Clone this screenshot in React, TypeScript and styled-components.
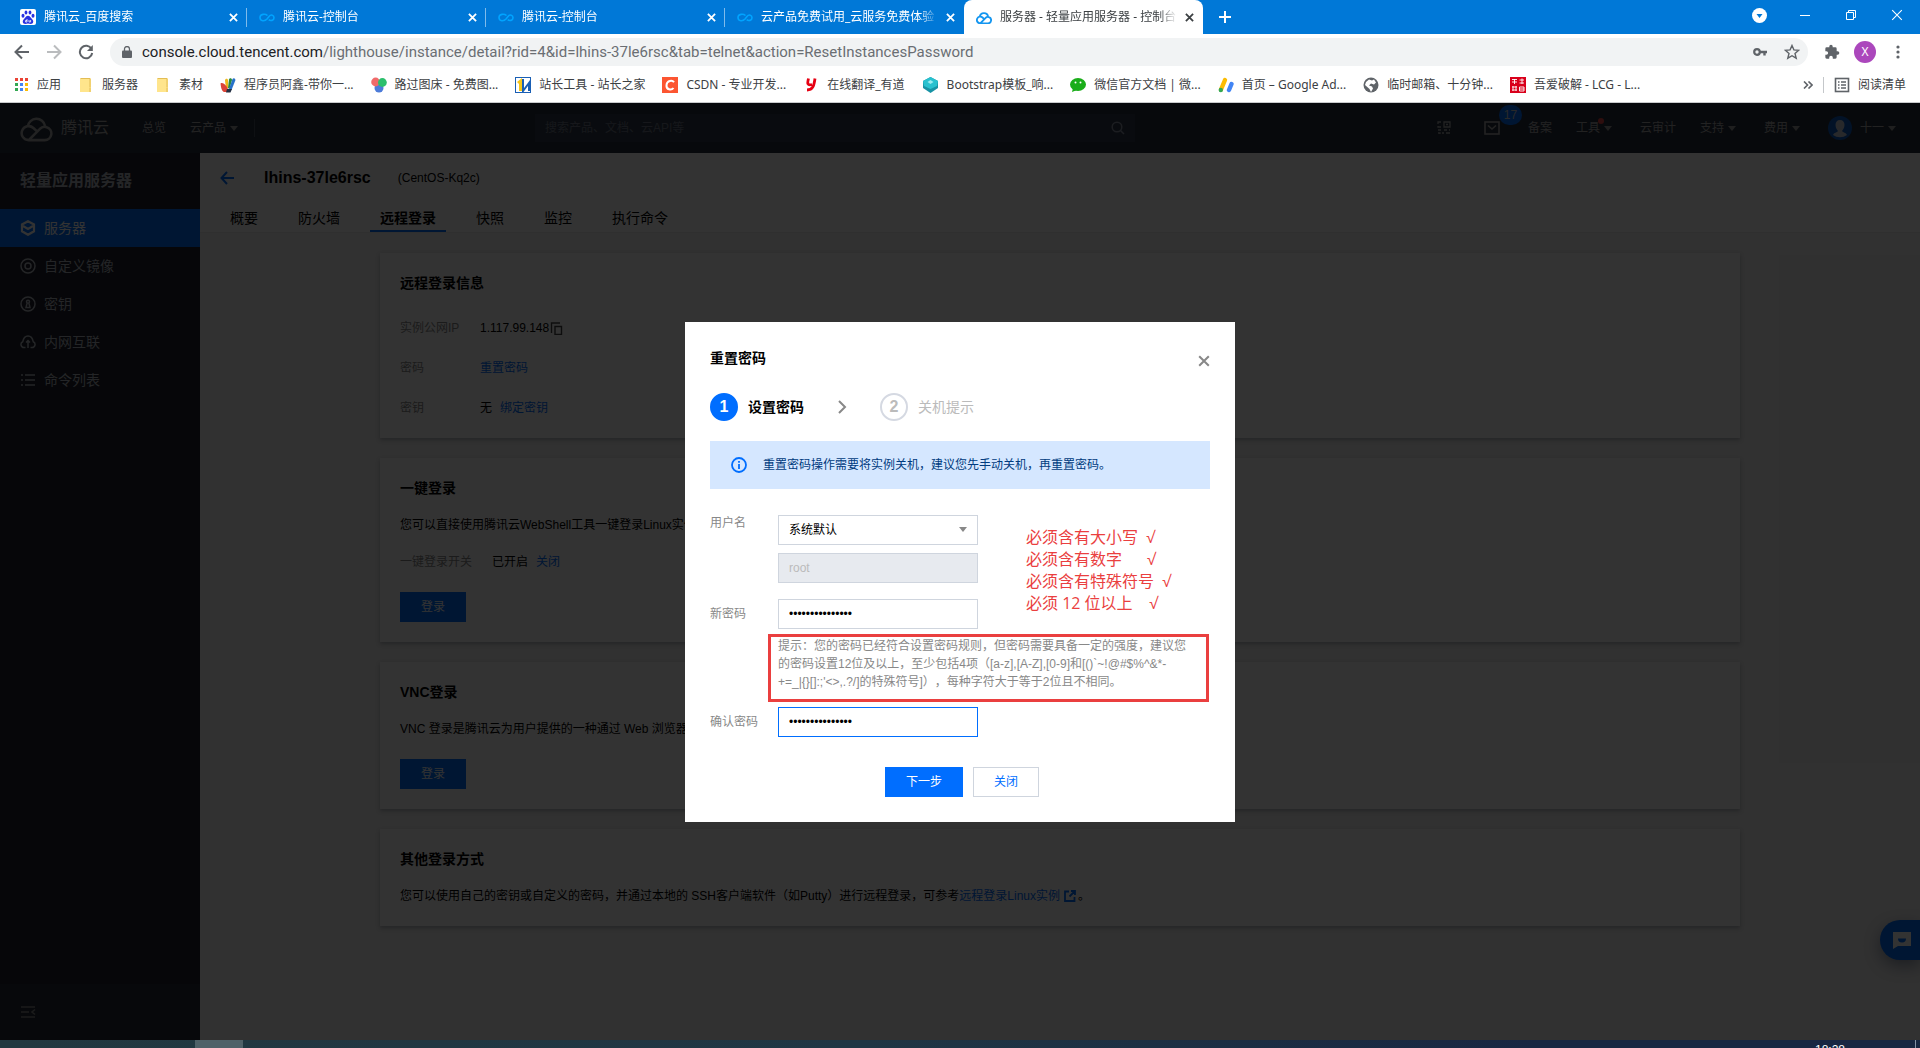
import React from "react";
import styled, { createGlobalStyle, css } from "styled-components";

const GlobalStyle = createGlobalStyle`
  *, *::before, *::after { box-sizing: border-box; }
  body {
    margin: 0;
    font-family: "Liberation Sans", "Noto Sans CJK SC", sans-serif;
    font-size: 12px;
    line-height: 20px;
    text-spacing-trim: space-all;
    color: #000;
  }
  h1, h2, h3, p, ul, dl, dd { margin: 0; padding: 0; }
  ul { list-style: none; }
  a { text-decoration: none; color: inherit; }
  button, input, select { font: inherit; color: inherit; }
  button { border: 0; padding: 0; background: none; cursor: pointer; }
  svg { display: block; flex: none; }
`;

const Screen = styled.div`
  display: flex;
  flex-direction: column;
  height: 100vh;
  overflow: hidden;
`;

/* ---------- Browser window ---------- */

const BrowserFrame = styled.header`
  flex: none;
  font-family: "Noto Sans", "Noto Sans CJK SC", sans-serif;
`;

const TabStrip = styled.div`
  display: flex;
  align-items: stretch;
  height: 34px;
  padding-left: 8px;
  background: #0078d7;
  color: #fff;
`;

const BrowserTab = styled.div<{ $active?: boolean; $divider?: boolean }>`
  position: relative;
  display: flex;
  align-items: center;
  gap: 8px;
  width: 239px;
  padding: 0 6px 0 12px;
  ${(p) =>
    p.$active &&
    css`
      background: #fff;
      color: #3c4043;
      border-radius: 8px 8px 0 0;
    `}
  ${(p) =>
    p.$divider &&
    css`
      &::after {
        content: "";
        position: absolute;
        right: 0;
        top: 8px;
        height: 19px;
        width: 1px;
        background: #7fbbeb;
      }
    `}
`;

const TabTitle = styled.span`
  flex: 1;
  margin-right: -4px;
  overflow: hidden;
  white-space: nowrap;
  mask-image: linear-gradient(90deg, #000 90%, transparent);
`;

const IconButton = styled.button`
  display: flex;
  align-items: center;
  justify-content: center;
  width: 16px;
  height: 16px;
`;

const NewTab = styled.button`
  display: flex;
  align-items: center;
  justify-content: center;
  width: 28px;
  margin: 3px 0 3px 8px;
`;

const WindowControls = styled.div`
  display: flex;
  align-items: center;
  gap: 30px;
  margin-left: auto;
  padding: 0 15px 4px 0;
`;

const Toolbar = styled.div`
  display: flex;
  align-items: center;
  gap: 16px;
  height: 35px;
  padding: 0 14px;
  background: #fff;
  color: #5f6368;
`;

const ToolbarEnd = styled.div`
  display: flex;
  align-items: center;
  gap: 14px;
`;

const AddressBar = styled.div`
  display: flex;
  flex: 1;
  align-items: center;
  gap: 16px;
  min-width: 0;
  height: 28px;
  padding: 0 8px 0 12px;
  border-radius: 14px;
  background: #f1f3f4;
`;

const AddressText = styled.p`
  flex: 1;
  margin-left: -6px;
  overflow: hidden;
  white-space: nowrap;
  font-family: Roboto, sans-serif;
  font-size: 15px;
  color: #6a6e73;
  b { font-weight: 400; color: #202124; }
`;

const ProfileButton = styled.button`
  width: 22px;
  height: 22px;
  border-radius: 50%;
  background: #ab47bc;
  color: #fff;
  line-height: 22px;
`;

const BookmarkBar = styled.nav`
  display: flex;
  align-items: center;
  gap: 17px;
  height: 34px;
  padding: 0 14px 2px 13px;
  border-bottom: 1px solid #c8cacc;
  background: #fff;
  color: #3c4043;
`;

const Bookmark = styled.a`
  display: flex;
  align-items: center;
  gap: 8px;
  white-space: nowrap;
`;

const BookmarkTail = styled.div`
  display: flex;
  align-items: center;
  gap: 10px;
  margin-left: auto;
`;

const TailDivider = styled.span`
  width: 1px;
  height: 16px;
  background: #c4c7ca;
`;

/* ---------- Console page ---------- */

const ConsolePage = styled.div`
  position: relative;
  display: flex;
  flex: 1;
  flex-direction: column;
  min-height: 0;
`;

const TopNav = styled.header`
  display: flex;
  align-items: center;
  height: 50px;
  padding: 0 20px;
  background: #262f3e;
  color: #aaa;
`;

const Brand = styled.a`
  display: flex;
  align-items: center;
  gap: 8px;
  width: 98px;
  font-size: 16px;
`;

const NavLink = styled.a<{ $icon?: boolean }>`
  display: flex;
  align-items: center;
  gap: 4px;
  position: relative;
  padding: 0 ${(p) => (p.$icon ? 4 : 0)}px;
  white-space: nowrap;
`;

const NavLeft = styled.nav`
  display: flex;
  flex: none;
  width: 515px;
  gap: 24px;
  align-items: center;
`;

const NavDivider = styled.span`
  width: 1px;
  height: 18px;
  margin-left: -12px;
  background: #464f5e;
`;

const SearchBox = styled.label`
  display: flex;
  align-items: center;
  width: 600px;
  height: 28px;
  padding: 0 10px;
  background: #303a4a;
  input {
    flex: 1;
    border: 0;
    padding: 0;
    background: none;
    outline: 0;
  }
  input::placeholder { color: #6d7686; }
`;

const NavRight = styled.nav`
  display: flex;
  flex: 1;
  align-items: center;
  justify-content: flex-end;
  gap: 24px;
`;

const Count = styled.span`
  position: absolute;
  left: 19px;
  top: -16px;
  width: 23px;
  height: 20px;
  border-radius: 10px;
  background: #006eff;
  color: #ccc;
  text-align: center;
`;

const RedDot = styled.span`
  position: absolute;
  left: 22px;
  top: 0;
  width: 6px;
  height: 6px;
  border-radius: 50%;
  background: #e54545;
`;

const Caret = styled.span<{ $color?: string }>`
  border: 4px solid transparent;
  border-top: 5px solid ${(p) => p.$color ?? "#999"};
  border-bottom: 0;
`;

const NavCaret = styled(Caret)`
  margin-right: 4px;
`;

const AvatarFrame = styled.span`
  margin-right: 4px;
`;

const Body = styled.div`
  display: flex;
  flex: 1;
  min-height: 0;
`;

const Sidebar = styled.aside`
  display: flex;
  flex-direction: column;
  width: 200px;
  flex: none;
  background: #1e222d;
  color: #b4b8c0;
`;

const SidebarTitle = styled.h2`
  padding: 18px 20px;
  font-size: 16px;
  font-weight: 700;
`;

const SidebarItem = styled.a<{ $active?: boolean }>`
  display: flex;
  align-items: center;
  gap: 8px;
  height: 38px;
  padding: 0 20px;
  font-size: 14px;
  background: ${(p) => (p.$active ? "#006eff" : "transparent")};
  color: ${(p) => (p.$active ? "#fff" : "#b4b8c0")};
`;

const SidebarFooter = styled.button`
  display: flex;
  align-items: center;
  height: 56px;
  margin-top: auto;
  padding: 0 20px;
  background: #262b38;
`;

const Content = styled.main`
  flex: 1;
  min-width: 0;
  background: #f2f2f2;
`;

const ContentHeader = styled.div`
  background: #fff;
  border-bottom: 1px solid #e8e8e8;
`;

const TitleRow = styled.div`
  display: flex;
  align-items: center;
  padding: 14px 20px 12px;
  h1 {
    margin: 0 27px 0 30px;
    font-size: 16px;
    line-height: 22px;
  }
`;

const TabList = styled.nav`
  display: flex;
  padding-left: 10px;
`;

const PageTab = styled.a<{ $active?: boolean }>`
  margin: 0 10px;
  padding: 7px 10px 2px;
  font-size: 14px;
  border-bottom: 2px solid ${(p) => (p.$active ? "#006eff" : "transparent")};
  font-weight: ${(p) => (p.$active ? 700 : 400)};
`;

const Cards = styled.div`
  display: flex;
  flex-direction: column;
  gap: 20px;
  max-width: 1400px;
  margin: 0 auto;
  padding: 20px;
`;

const Card = styled.section`
  padding: 20px;
  background: #fff;
  box-shadow: 0 2px 4px rgba(54, 58, 80, 0.32);
  h3 { margin-bottom: 17px; font-size: 14px; }
`;

const Info = styled.dl`
  display: flex;
  flex-direction: column;
  gap: 20px;
  padding: 8px 0 0;
`;

const InfoRow = styled.div<{ $label?: number }>`
  display: flex;
  dt { width: ${(p) => p.$label ?? 80}px; color: #888; }
  dd { display: flex; align-items: center; gap: 8px; }
`;

const SwitchRow = styled(Info)`
  padding: 17px 0 0;
`;

const Address = styled.span`
  display: flex;
  align-items: center;
`;

const Link = styled.a`
  color: #006eff;
`;

const InlineIcon = styled.span`
  display: inline-block;
  margin: 0 2px 0 4px;
  vertical-align: -2px;
`;

const Button = styled.button<{ $kind?: "primary" | "weak"; $wide?: boolean }>`
  width: ${(p) => (p.$wide ? 78 : 66)}px;
  height: 30px;
  border: 1px solid ${(p) => (p.$kind === "weak" ? "#cfd5de" : "#006eff")};
  background: ${(p) => (p.$kind === "weak" ? "#fff" : "#006eff")};
  color: ${(p) => (p.$kind === "weak" ? "#006eff" : "#fff")};
`;

const CardAction = styled.div`
  margin-top: 20px;
`;

const HelpButton = styled.button`
  position: absolute;
  right: 0;
  bottom: 80px;
  display: flex;
  align-items: center;
  width: 40px;
  height: 40px;
  padding-left: 12px;
  border-radius: 20px 0 0 20px;
  background: #006eff;
  box-shadow: 0 6px 16px rgba(0, 20, 60, 0.4);
`;

/* ---------- Dialog ---------- */

const Overlay = styled.div`
  position: absolute;
  inset: 0;
  display: flex;
  align-items: center;
  justify-content: center;
  background: rgba(0, 0, 0, 0.8);
`;

const Dialog = styled.div`
  position: relative;
  width: 550px;
  padding: 25px;
  background: #fff;
`;

const DialogHead = styled.div`
  display: flex;
  align-items: center;
  justify-content: space-between;
  height: 22px;
  margin-bottom: 24px;
  h2 { font-size: 14px; }
`;

const CloseButton = styled(IconButton)`
  align-self: flex-end;
  width: 12px;
`;

const Steps = styled.ol`
  display: flex;
  align-items: center;
  margin: 0 0 20px;
  padding: 0;
  list-style: none;
  font-size: 14px;
`;

const Step = styled.li<{ $current?: boolean }>`
  display: flex;
  align-items: center;
  gap: 10px;
  color: ${(p) => (p.$current ? "#000" : "#bbb")};
  font-weight: ${(p) => (p.$current ? 700 : 400)};
  span {
    width: 28px;
    height: 28px;
    border: 2px solid ${(p) => (p.$current ? "#006eff" : "#d5d9e2")};
    border-radius: 50%;
    background: ${(p) => (p.$current ? "#006eff" : "#fff")};
    color: ${(p) => (p.$current ? "#fff" : "#bbb")};
    font-size: 16px;
    font-weight: 700;
    line-height: 24px;
    text-align: center;
  }
`;

const StepArrow = styled.li`
  padding: 0 32px;
`;

const Notice = styled.p`
  display: flex;
  align-items: center;
  gap: 16px;
  height: 48px;
  margin-bottom: 26px;
  padding: 0 21px;
  background: #d5e7ff;
  color: #003b80;
`;

const Form = styled.form`
  display: flex;
  flex-direction: column;
  gap: 16px;
`;

const Field = styled.div<{ $labelAtTop?: boolean }>`
  display: grid;
  grid-template-columns: 68px 1fr;
  > label {
    padding-top: ${(p) => (p.$labelAtTop ? 0 : 7)}px;
    line-height: 16px;
    color: #888;
  }
`;

const Controls = styled.div`
  display: flex;
  flex-direction: column;
  align-items: flex-start;
  gap: 8px;
`;

const fieldBox = css`
  width: 200px;
  height: 30px;
  padding: 0 10px;
  border: 1px solid #cfd5de;
  border-radius: 0;
  background: #fff;
  outline: 0;
`;

const TextInput = styled.input<{ $focused?: boolean }>`
  ${fieldBox}
  border-color: ${(p) => (p.$focused ? "#006eff" : "#cfd5de")};
  &:disabled { background: #e7eaef; color: #bbb; }
`;

const SelectWrap = styled.div`
  display: grid;
  align-items: center;
  > * { grid-area: 1 / 1; }
  > span { justify-self: end; margin-right: 11px; pointer-events: none; }
`;

const Select = styled.select`
  ${fieldBox}
  appearance: none;
`;

const Hint = styled.p`
  position: relative;
  width: 410px;
  line-height: 18px;
  color: #888;
  &::after {
    content: "";
    position: absolute;
    inset: -3px -21px -11px -10px;
    border: 3px solid #ea3f3f;
  }
`;

const Annotation = styled.ul`
  position: absolute;
  left: 341px;
  top: 204px;
  color: #ea3f3f;
  font-family: "Open Sans", "Noto Sans CJK SC", sans-serif;
  font-size: 16px;
  line-height: 22px;
  white-space: pre;
`;

const Actions = styled.div`
  display: flex;
  justify-content: center;
  gap: 10px;
  margin-top: 14px;
  padding-left: 4px;
`;

/* ---------- Taskbar ---------- */

const Taskbar = styled.footer`
  display: flex;
  flex: none;
  height: 8px;
  padding-right: 4px;
  overflow: hidden;
  background: linear-gradient(90deg, #223840, #1f3644 45%, #182742 80%);
  color: #fff;
`;

const TaskItem = styled.span`
  width: 48px;
  margin-left: 195px;
  background: #4f6168;
`;

const Clock = styled.time`
  margin: 0 70px 0 auto;
  padding-top: 3px;
  line-height: 14px;
`;

const ShowDesktop = styled.span`
  width: 1px;
  background: #8492a6;
`;

/* ---------- Drawings ---------- */

const Cross = ({ size = 10, color = "currentColor", weight = 2 }) => (
  <svg width={size} height={size} viewBox="0 0 10 10" fill="none" stroke={color} strokeWidth={weight}>
    <path d="M1 1l8 8M9 1L1 9" />
  </svg>
);

const CloudLogo = ({ width, color, weight = 2.6 }: { width: number; color: string; weight?: number }) => (
  <svg width={width} height={Math.round(width * 0.84)} viewBox="0 0 34 28" fill="none" stroke={color} strokeWidth={weight}>
    <path d="M9 26.5h16.500a6.800 6.800 0 0 0 2-13.300 6.500 6.500 0 0 0-7 1.700L9 26.500a7.200 7.200 0 1 1 4.800-12.500l3.200 3" />
    <path d="M8 12.500a9 9 0 0 1 17.800-.5" />
  </svg>
);

const Loop = () => (
  <svg width="16" height="16" viewBox="0 0 16 16" fill="none" stroke="#00a4ff" strokeWidth="1.600">
    <path d="M8.500 6.500C6.500 4.800 1 4.500 1 8.500c0 4.200 5 3.800 7 1.500l2-2.500c2-2.500 5-1.500 5 1.200 0 3-3.500 3.500-5.300 2" />
  </svg>
);

const Baidu = () => (
  <svg width="16" height="16" viewBox="0 0 16 16">
    <rect width="16" height="16" rx="2" fill="#fff" />
    <g fill="#2932e1">
      <ellipse cx="3" cy="6.800" rx="1.500" ry="2" />
      <ellipse cx="6" cy="3.400" rx="1.400" ry="2" />
      <ellipse cx="10" cy="3.400" rx="1.400" ry="2" />
      <ellipse cx="13" cy="6.800" rx="1.500" ry="2" />
      <path d="M8 6.800c2 0 2.600 2 4.200 3.500 1.800 1.700 1.200 4.700-1.400 4.700-1 0-1.700-.4-2.800-.4s-1.800.4-2.800.4c-2.600 0-3.200-3-1.400-4.700C5.400 8.800 6 6.800 8 6.800z" />
    </g>
    <path d="M7 10v3H5.600v-1.500H7M9 11v2h1.600v-2" stroke="#fff" strokeWidth=".8" fill="none" />
  </svg>
);

const AppsGrid = () => (
  <svg width="16" height="16" viewBox="0 0 16 16">
    {["#ea4335", "#ea4335", "#ea4335", "#34a853", "#4285f4", "#fbbc05", "#34a853", "#4285f4", "#fbbc05"].map((c, i) => (
      <rect key={i} x={2 + (i % 3) * 5} y={1 + Math.floor(i / 3) * 5} width="3" height="3" fill={c} />
    ))}
  </svg>
);

const Folder = () => (
  <svg width="16" height="16" viewBox="0 0 16 16">
    <path d="M3 1h9l1 1v13H2V2z" fill="#ffe58c" />
    <path d="M12 11v4M2.500 1.500h9.500v9" stroke="#e3bd55" fill="none" />
  </svg>
);

const Colorful = () => (
  <svg width="16" height="16" viewBox="0 0 16 16">
    <path d="M5 3.500C5 1.500 7.500 1 8 3l.5 8H6z" fill="#efb81a" />
    <path d="M9 2.500C9.500.5 12 .8 12 3l-2.500 9L8 11z" fill="#2a8a3e" />
    <path d="M12.500 2c1-1.500 3.200-.5 2.800 1.500L11.500 13 9 12z" fill="#2671c9" />
    <path d="M.5 6.500C3 5 6 8 8 12l2 3H4C1.500 14 1 10 .5 6.500z" fill="#db4437" />
    <path d="M7 12h5l-1.500 3.500H6z" fill="#222f42" />
  </svg>
);

const Petals = () => (
  <svg width="16" height="16" viewBox="0 0 16 16">
    <circle cx="8" cy="11" r="4.500" fill="#4c7bd9" />
    <circle cx="4.600" cy="5" r="4.400" fill="#f06a6a" />
    <circle cx="11.400" cy="5.500" r="4.400" fill="#2cbf6c" />
  </svg>
);

const ChinaZ = () => (
  <svg width="16" height="16" viewBox="0 0 16 16">
    <rect x=".5" y=".5" width="15" height="15" fill="#fff" stroke="#1a5fb4" />
    <path d="M2 5l5-4v13H4V7z" fill="#f5c518" />
    <path d="M8 2v12l6-8v8" stroke="#1a5fb4" strokeWidth="2" fill="none" />
  </svg>
);

const Csdn = () => (
  <svg width="16" height="16" viewBox="0 0 16 16">
    <rect width="16" height="16" fill="#fc5531" />
    <path d="M12 5.200C10.500 3 5 3 4.500 8s5 5.500 7 3" stroke="#fff" strokeWidth="2" fill="none" />
  </svg>
);

const Youdao = () => (
  <svg width="16" height="16" viewBox="0 0 16 16" fill="none" stroke="#e60012" strokeWidth="2.800">
    <path d="M5.500 1.500C4 7 4.500 8.500 9 7.500M12 1.500c-1 7-2 11.500-8 11.500" />
  </svg>
);

const Gem = () => (
  <svg width="17" height="16" viewBox="0 0 17 16">
    <path d="M8.500 0L16 4v7l-7.500 5L1 11V4z" fill="#1793a5" />
    <path d="M8.500 0L16 4l-1 5-6.500 3L2 9 1 4z" fill="#29c1cf" />
    <path d="M8.500 3l3 2-3 2-3-2z" fill="#9aebf0" />
  </svg>
);

const Wechat = () => (
  <svg width="16" height="16" viewBox="0 0 16 16">
    <ellipse cx="8" cy="7.500" rx="8" ry="6.500" fill="#1aad19" />
    <path d="M3 11l-1 4 5-2z" fill="#1aad19" />
    <circle cx="5.500" cy="5.500" r="1" fill="#fff" />
    <circle cx="10.500" cy="5.500" r="1" fill="#fff" />
  </svg>
);

const Ads = () => (
  <svg width="16" height="16" viewBox="0 0 16 16" strokeLinecap="round" strokeWidth="4.400">
    <path d="M7 3L3 12.500" stroke="#fbbc04" />
    <path d="M13.500 7L11 13" stroke="#4285f4" />
    <circle cx="2.800" cy="13" r="2.200" fill="#34a853" />
  </svg>
);

const Globe = () => (
  <svg width="16" height="16" viewBox="0 0 16 16">
    <circle cx="8" cy="8" r="7.500" fill="#5f6368" />
    <path d="M6 2.500l3 1 2-1 2 3-2 2-3-1-2 2 3 1 1 2-2 3.500-1.500-3L2 8l1-3z" fill="#fff" />
  </svg>
);

const Seal = () => (
  <svg width="16" height="16" viewBox="0 0 16 16">
    <rect width="16" height="16" fill="#d9001b" />
    <path d="M2 2.500h5M2 5h5M4.500 2v5M9.500 3H14M9.500 6H14M12 1.500V7M2 10h5M2 13h5M3 9v5M6 9v5M9.500 10H14v4H9.500zM9.500 12H14" stroke="#fff" strokeWidth=".9" fill="none" />
  </svg>
);

const ReadingList = () => (
  <svg width="16" height="16" viewBox="0 0 16 16" fill="none" stroke="#5f6368" strokeWidth="1.600">
    <rect x="1.500" y="1.500" width="13" height="13" />
    <path d="M4 5h1.500M7 5h5M4 8h1.500M7 8h5M4 11h1.500M7 11h5" />
  </svg>
);

const NavArrow = ({ flip, color }: { flip?: boolean; color: string }) => (
  <svg width="16" height="16" viewBox="0 0 16 16" fill="none" stroke={color} strokeWidth="2">
    <path d={flip ? "M1 8h13M8 1.500L14.500 8 8 14.500" : "M15 8H2M8 1.500L1.500 8 8 14.500"} />
  </svg>
);

const Reload = () => (
  <svg width="16" height="16" viewBox="0 0 16 16" fill="none" stroke="#5f6368" strokeWidth="2">
    <path d="M13.500 5A6.200 6.200 0 1 0 14.200 9" />
    <path d="M14.800 1v6H9z" fill="#5f6368" stroke="none" />
  </svg>
);

const Lock = () => (
  <svg width="10" height="12" viewBox="0 0 10 12">
    <rect y="4.500" width="10" height="7.500" rx="1" fill="#5f6368" />
    <path d="M2.500 5V3a2.500 2.500 0 0 1 5 0v2" fill="none" stroke="#5f6368" strokeWidth="1.300" />
  </svg>
);

const KeyIcon = () => (
  <svg width="14" height="10" viewBox="0 0 14 10" fill="none" stroke="#5f6368">
    <circle cx="4" cy="5" r="2.800" strokeWidth="2.200" />
    <path d="M7 5h7M11.500 5v3.500" strokeWidth="2.400" />
  </svg>
);

const Star = () => (
  <svg width="16" height="16" viewBox="0 0 16 16" fill="none" stroke="#5f6368" strokeWidth="1.400">
    <path d="M8 1.500l1.900 4.400 4.800.4-3.700 3.200 1.200 4.700L8 11.700l-4.200 2.500L5 9.500 1.300 6.300l4.800-.4z" />
  </svg>
);

const Puzzle = () => (
  <svg width="16" height="16" viewBox="0 0 24 24" fill="#5f6368">
    <path d="M20.500 11H19V7a2 2 0 0 0-2-2h-4V3.500a2.500 2.500 0 0 0-5 0V5H4a2 2 0 0 0-2 2v3.800h1.500a2.700 2.700 0 0 1 0 5.400H2V20a2 2 0 0 0 2 2h3.800v-1.500a2.700 2.700 0 0 1 5.400 0V22H17a2 2 0 0 0 2-2v-4h1.500a2.500 2.500 0 0 0 0-5z" />
  </svg>
);

const Dots = () => (
  <svg width="4" height="14" viewBox="0 0 4 14" fill="#5f6368">
    <circle cx="2" cy="2" r="1.600" />
    <circle cx="2" cy="7" r="1.600" />
    <circle cx="2" cy="12" r="1.600" />
  </svg>
);

const SearchIcon = () => (
  <svg width="14" height="14" viewBox="0 0 14 14" fill="none" stroke="#8a93a3" strokeWidth="1.500">
    <circle cx="6" cy="6" r="4.800" />
    <path d="M9.500 9.500L13 13" />
  </svg>
);

const QrIcon = () => (
  <svg width="16" height="16" viewBox="0 0 16 16" fill="none" stroke="#aaa" strokeWidth="1.300">
    <path d="M5 2H2v2M2 6v1h3M8 2h6v5H8zM10 4.500h2M2 10h3M8 10h3M13 10h1M2 13h2v1M6 13h2M10 13h4" />
  </svg>
);

const MailIcon = () => (
  <svg width="16" height="14" viewBox="0 0 16 14" fill="none" stroke="#aaa" strokeWidth="1.600">
    <rect x="1" y="1" width="14" height="12" />
    <path d="M4 4.500L8 8l4-3.500" />
  </svg>
);

const Avatar = () => (
  <svg width="24" height="24" viewBox="0 0 24 24">
    <circle cx="12" cy="12" r="12" fill="#0a5cc4" />
    <path d="M12 4c3 0 4.500 2 4.500 5S14.800 14 14 15c1 1.500 4 1.500 5 4a12 12 0 0 1-14 0c1-2.500 4-2.500 5-4-.8-1-2.500-3-2.500-6S9 4 12 4z" fill="#c9ced6" />
  </svg>
);

type SideIconName = "cube" | "disc" | "key" | "network" | "list";
const sideShapes: Record<SideIconName, React.ReactNode> = {
  cube: <path d="M8 1.200l6 3.300v6.800l-6 3.500-6-3.500V4.500zM3 6l5 3 5-3" strokeWidth="2.200" />,
  disc: (
    <>
      <circle cx="8" cy="8" r="7" />
      <circle cx="8" cy="8" r="3" />
    </>
  ),
  key: (
    <>
      <circle cx="8" cy="8" r="7" />
      <circle cx="8" cy="5.800" r="1.500" />
      <path d="M7 7.500L6 11.500h4L9 7.500" />
    </>
  ),
  network: <path d="M5.500 13.500H4.200a3 3 0 0 1-1.500-5.700C3.500 4 5.500 2 8 2s4.500 2 5.300 5.800a3 3 0 0 1-1.500 5.700h-1.300M8 7v7M6 8.500L8 6.500l2 2" />,
  list: <path d="M1 3h2M5 3h10M1 8h2M5 8h10M1 13h2M5 13h10" />,
};

const SideIcon = ({ name }: { name: SideIconName }) => (
  <svg width="16" height="16" viewBox="0 0 16 16" fill="none" stroke="currentColor" strokeWidth="1.500">
    {sideShapes[name]}
  </svg>
);

/* ---------- Data ---------- */

const openTabs = [
  { title: "腾讯云_百度搜索", icon: <Baidu />, divider: true },
  { title: "腾讯云-控制台", icon: <Loop />, divider: true },
  { title: "腾讯云-控制台", icon: <Loop />, divider: true },
  { title: "云产品免费试用_云服务免费体验", icon: <Loop /> },
  { title: "服务器 - 轻量应用服务器 - 控制台", icon: <CloudLogo width={16} color="#1496f0" weight={4} />, active: true },
];

const bookmarks = [
  { title: "应用", icon: <AppsGrid /> },
  { title: "服务器", icon: <Folder /> },
  { title: "素材", icon: <Folder /> },
  { title: "程序员阿鑫-带你一...", icon: <Colorful /> },
  { title: "路过图床 - 免费图...", icon: <Petals /> },
  { title: "站长工具 - 站长之家", icon: <ChinaZ /> },
  { title: "CSDN - 专业开发...", icon: <Csdn /> },
  { title: "在线翻译_有道", icon: <Youdao /> },
  { title: "Bootstrap模板_响...", icon: <Gem /> },
  { title: "微信官方文档 | 微...", icon: <Wechat /> },
  { title: "首页 – Google Ad...", icon: <Ads /> },
  { title: "临时邮箱、十分钟...", icon: <Globe /> },
  { title: "吾爱破解 - LCG - L...", icon: <Seal /> },
];

const sideItems: { title: string; icon: SideIconName; active?: boolean }[] = [
  { title: "服务器", icon: "cube", active: true },
  { title: "自定义镜像", icon: "disc" },
  { title: "密钥", icon: "key" },
  { title: "内网互联", icon: "network" },
  { title: "命令列表", icon: "list" },
];

const pageTabs = ["概要", "防火墙", "远程登录", "快照", "监控", "执行命令"];

/* ---------- Sections ---------- */

const Browser = () => (
  <BrowserFrame>
    <TabStrip>
      {openTabs.map((t, i) => (
        <BrowserTab key={i} $active={t.active} $divider={t.divider}>
          {t.icon}
          <TabTitle>{t.title}</TabTitle>
          <IconButton aria-label="关闭标签页">
            <Cross size={9} />
          </IconButton>
        </BrowserTab>
      ))}
      <NewTab aria-label="新标签页">
        <svg width="12" height="12" viewBox="0 0 12 12" stroke="#fff" strokeWidth="2">
          <path d="M6 0v12M0 6h12" />
        </svg>
      </NewTab>
      <WindowControls>
        <IconButton aria-label="搜索标签页">
          <svg width="15" height="15" viewBox="0 0 15 15">
            <circle cx="7.500" cy="7.500" r="7.500" fill="#fff" />
            <path d="M4.500 6h6l-3 4z" fill="#0078d7" />
          </svg>
        </IconButton>
        <IconButton aria-label="最小化">
          <svg width="10" height="10" viewBox="0 0 10 10" stroke="#fff">
            <path d="M0 5.500h10" />
          </svg>
        </IconButton>
        <IconButton aria-label="还原">
          <svg width="10" height="10" viewBox="0 0 10 10" stroke="#fff" fill="none">
            <path d="M.5 2.500h7v7h-7zM2.500 2.500v-2h7v7h-2" />
          </svg>
        </IconButton>
        <IconButton aria-label="关闭">
          <Cross size={12} weight={0.9} />
        </IconButton>
      </WindowControls>
    </TabStrip>

    <Toolbar>
      <IconButton aria-label="后退"><NavArrow color="#5f6368" /></IconButton>
      <IconButton aria-label="前进"><NavArrow flip color="#babcbe" /></IconButton>
      <IconButton aria-label="刷新"><Reload /></IconButton>
      <AddressBar>
        <Lock />
        <AddressText>
          <b>console.cloud.tencent.com</b>
          /lighthouse/instance/detail?rid=4&id=lhins-37le6rsc&tab=telnet&action=ResetInstancesPassword
        </AddressText>
        <IconButton aria-label="密码"><KeyIcon /></IconButton>
        <IconButton aria-label="收藏"><Star /></IconButton>
      </AddressBar>
      <ToolbarEnd>
        <IconButton aria-label="扩展程序"><Puzzle /></IconButton>
        <ProfileButton>X</ProfileButton>
        <IconButton aria-label="菜单"><Dots /></IconButton>
      </ToolbarEnd>
    </Toolbar>

    <BookmarkBar>
      {bookmarks.map((b) => (
        <Bookmark key={b.title} href="#">
          {b.icon}
          {b.title}
        </Bookmark>
      ))}
      <BookmarkTail>
        <svg width="10" height="8" viewBox="0 0 10 8" fill="none" stroke="#5f6368" strokeWidth="1.600">
          <path d="M1 .5L4.500 4 1 7.500M5.500 .5L9 4 5.500 7.500" />
        </svg>
        <TailDivider />
        <Bookmark href="#">
          <ReadingList />
          阅读清单
        </Bookmark>
      </BookmarkTail>
    </BookmarkBar>
  </BrowserFrame>
);

const ConsoleNav = () => (
  <TopNav>
    <NavLeft>
      <Brand href="#">
        <CloudLogo width={33} color="#aaa" />
        腾讯云
      </Brand>
      <NavLink href="#">总览</NavLink>
      <NavLink href="#">
        云产品
        <NavCaret />
      </NavLink>
      <NavDivider />
    </NavLeft>
    <SearchBox>
      <input placeholder="搜索产品、文档、云API等" aria-label="搜索" />
      <SearchIcon />
    </SearchBox>
    <NavRight>
      <NavLink href="#" $icon><QrIcon /></NavLink>
      <NavLink href="#" $icon>
        <MailIcon />
        <Count>17</Count>
      </NavLink>
      <NavLink href="#">备案</NavLink>
      <NavLink href="#">
        工具
        <RedDot />
        <NavCaret />
      </NavLink>
      <NavLink href="#">云审计</NavLink>
      <NavLink href="#">
        支持
        <NavCaret />
      </NavLink>
      <NavLink href="#">
        费用
        <NavCaret />
      </NavLink>
      <NavLink href="#">
        <AvatarFrame>
          <Avatar />
        </AvatarFrame>
        十一
        <NavCaret />
      </NavLink>
    </NavRight>
  </TopNav>
);

const ResetPasswordDialog = () => (
  <Dialog role="dialog" aria-labelledby="dialog-title">
    <DialogHead>
      <h2 id="dialog-title">重置密码</h2>
      <CloseButton aria-label="关闭对话框">
        <Cross size={12} color="#888" weight={1.7} />
      </CloseButton>
    </DialogHead>
    <Steps>
      <Step $current>
        <span>1</span>
        设置密码
      </Step>
      <StepArrow>
        <svg width="12" height="14" viewBox="0 0 12 14" fill="none" stroke="#888" strokeWidth="2">
          <path d="M3 1l6 6-6 6" />
        </svg>
      </StepArrow>
      <Step>
        <span>2</span>
        关机提示
      </Step>
    </Steps>
    <Notice>
      <svg width="16" height="16" viewBox="0 0 16 16" fill="none" stroke="#006eff" strokeWidth="1.800">
        <circle cx="8" cy="8" r="7" />
        <path d="M8 7v5M8 4v1.800" />
      </svg>
      重置密码操作需要将实例关机，建议您先手动关机，再重置密码。
    </Notice>
    <Form onSubmit={(e) => e.preventDefault()}>
      <Field $labelAtTop>
        <label htmlFor="user-mode">用户名</label>
        <Controls>
          <SelectWrap>
            <Select id="user-mode">
              <option>系统默认</option>
            </Select>
            <Caret $color="#888" />
          </SelectWrap>
          <TextInput aria-label="root" value="root" disabled readOnly />
        </Controls>
      </Field>
      <Field>
        <label htmlFor="new-password">新密码</label>
        <Controls>
          <TextInput id="new-password" type="password" defaultValue="Aa1!Aa1!Aa1!Aa1" />
          <Hint>
            {"提示：您的密码已经符合设置密码规则，但密码需要具备一定的强度，建议您的密码设置12位及以上，至少包括4项（[a-z],[A-Z],[0-9]和[()`~!@#$%^&*-+=_|{}[]:;'<>,.?/]的特殊符号]），每种字符大于等于2位且不相同。"}
          </Hint>
        </Controls>
      </Field>
      <Field>
        <label htmlFor="confirm-password">确认密码</label>
        <Controls>
          <TextInput id="confirm-password" type="password" defaultValue="Aa1!Aa1!Aa1!Aa1" $focused />
        </Controls>
      </Field>
      <Actions>
        <Button $wide>下一步</Button>
        <Button $kind="weak" type="button">关闭</Button>
      </Actions>
    </Form>
    <Annotation>
      <li>{"必须含有大小写  √"}</li>
      <li>{"必须含有数字      √"}</li>
      <li>{"必须含有特殊符号  √"}</li>
      <li>{"必须 12 位以上    √"}</li>
    </Annotation>
  </Dialog>
);

export default function App() {
  return (
    <Screen>
      <GlobalStyle />
      <Browser />
      <ConsolePage>
        <ConsoleNav />
        <Body>
          <Sidebar>
            <SidebarTitle>轻量应用服务器</SidebarTitle>
            {sideItems.map((s) => (
              <SidebarItem key={s.title} href="#" $active={s.active}>
                <SideIcon name={s.icon} />
                {s.title}
              </SidebarItem>
            ))}
            <SidebarFooter aria-label="收起菜单">
              <svg width="16" height="12" viewBox="0 0 16 12" fill="none" stroke="#888" strokeWidth="1.600">
                <path d="M1 1h14M1 6h8M1 11h14M15 3.500L12 6l3 2.500" />
              </svg>
            </SidebarFooter>
          </Sidebar>
          <Content>
            <ContentHeader>
              <TitleRow>
                <svg width="14" height="14" viewBox="0 0 14 14" fill="none" stroke="#006eff" strokeWidth="2">
                  <path d="M14 7H2M7 1L1.500 7 7 13" />
                </svg>
                <h1>lhins-37le6rsc</h1>
                (CentOS-Kq2c)
              </TitleRow>
              <TabList>
                {pageTabs.map((t) => (
                  <PageTab key={t} href="#" $active={t === "远程登录"}>
                    {t}
                  </PageTab>
                ))}
              </TabList>
            </ContentHeader>
            <Cards>
              <Card>
                <h3>远程登录信息</h3>
                <Info>
                  <InfoRow>
                    <dt>实例公网IP</dt>
                    <dd>
                      <Address>
                        1.117.99.148
                        <svg width="14" height="14" viewBox="0 0 14 14" fill="none" stroke="#444" strokeWidth="1.400">
                          <path d="M2.500 12V2H11M6 5.500h6.500v8H6z" />
                        </svg>
                      </Address>
                    </dd>
                  </InfoRow>
                  <InfoRow>
                    <dt>密码</dt>
                    <dd><Link href="#">重置密码</Link></dd>
                  </InfoRow>
                  <InfoRow>
                    <dt>密钥</dt>
                    <dd>无 <Link href="#">绑定密钥</Link></dd>
                  </InfoRow>
                </Info>
              </Card>
              <Card>
                <h3>一键登录</h3>
                <p>您可以直接使用腾讯云WebShell工具一键登录Linux实例</p>
                <SwitchRow>
                  <InfoRow $label={92}>
                    <dt>一键登录开关</dt>
                    <dd>已开启 <Link href="#">关闭</Link></dd>
                  </InfoRow>
                </SwitchRow>
                <CardAction>
                  <Button>登录</Button>
                </CardAction>
              </Card>
              <Card>
                <h3>VNC登录</h3>
                <p>VNC 登录是腾讯云为用户提供的一种通过 Web 浏览器</p>
                <CardAction>
                  <Button>登录</Button>
                </CardAction>
              </Card>
              <Card>
                <h3>其他登录方式</h3>
                <p>
                  您可以使用自己的密钥或自定义的密码，并通过本地的 SSH客户端软件（如Putty）进行远程登录，可参考
                  <Link href="#">
                    远程登录Linux实例
                    <InlineIcon>
                      <svg width="12" height="12" viewBox="0 0 12 12" fill="none" stroke="#006eff" strokeWidth="1.800">
                        <path d="M5 1.500H1v9.500h9.500V7M7 1h4v4M11 1L5.500 6.500" />
                      </svg>
                    </InlineIcon>
                  </Link>
                  。
                </p>
              </Card>
            </Cards>
          </Content>
        </Body>
        <HelpButton aria-label="在线咨询">
          <svg width="20" height="18" viewBox="0 0 20 18">
            <path d="M1 1h18v14H6l-5 3z" fill="#fff" />
            <path d="M6 7.500h8a4 4 0 0 1-8 0z" fill="#006eff" />
          </svg>
        </HelpButton>
        <Overlay>
          <ResetPasswordDialog />
        </Overlay>
      </ConsolePage>
      <Taskbar>
        <TaskItem />
        <Clock>18:28</Clock>
        <ShowDesktop />
      </Taskbar>
    </Screen>
  );
}
